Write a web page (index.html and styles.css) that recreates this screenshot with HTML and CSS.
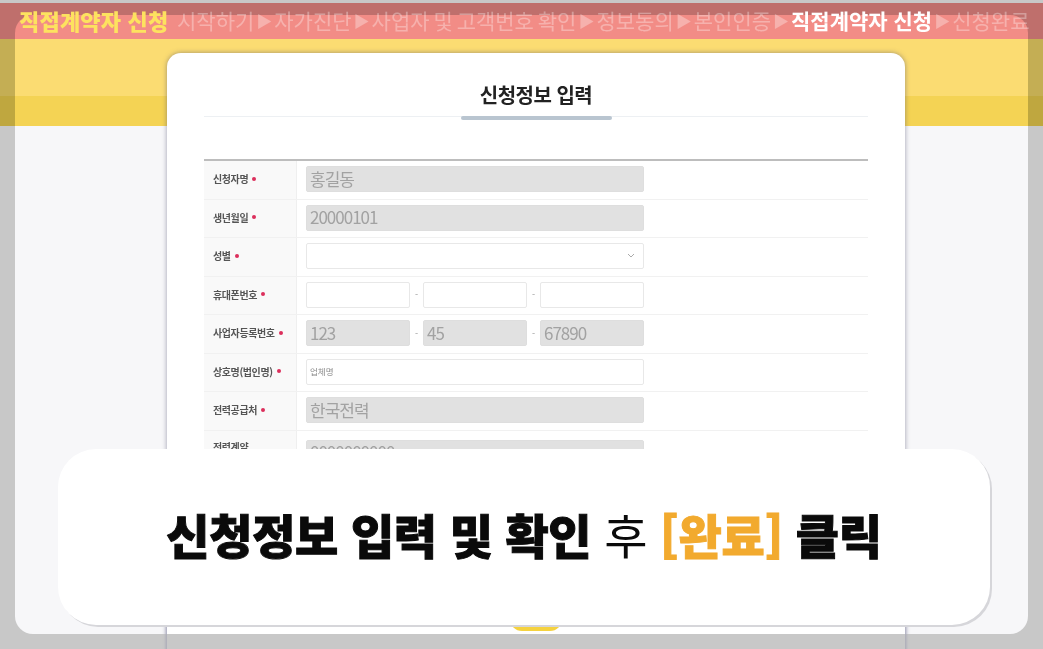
FILE: index.html
```html
<!DOCTYPE html>
<html lang="ko">
<head>
<meta charset="utf-8">
<title>직접계약자 신청</title>
<link rel="stylesheet" href="styles.css">
</head>
<body>
<div class="stage">
  <div class="card-ghost"></div>
  <main class="screen">
    <section class="card">
      <h1 class="title">신청정보 입력</h1>
      <div class="title-rule"><span class="title-mark"></span></div>
      <div class="table">
        <div class="row"><div class="label">신청자명<i class="dot"></i></div><div class="cell"><div class="field grey wide">홍길동</div></div></div>
        <div class="row"><div class="label">생년월일<i class="dot"></i></div><div class="cell"><div class="field grey wide">20000101</div></div></div>
        <div class="row"><div class="label">성별<i class="dot"></i></div><div class="cell"><div class="field wide select"><svg class="chev" width="8" height="5" viewBox="0 0 8 5"><path d="M1 1l3 3 3-3" fill="none" stroke="#aaa" stroke-width="1"/></svg></div></div></div>
        <div class="row"><div class="label">휴대폰번호<i class="dot"></i></div><div class="cell"><div class="field part"></div><span class="dash">-</span><div class="field part"></div><span class="dash">-</span><div class="field part"></div></div></div>
        <div class="row"><div class="label">사업자등록번호<i class="dot"></i></div><div class="cell"><div class="field grey part">123</div><span class="dash">-</span><div class="field grey part">45</div><span class="dash">-</span><div class="field grey part">67890</div></div></div>
        <div class="row"><div class="label">상호명(법인명)<i class="dot"></i></div><div class="cell"><div class="field wide hint">업체명</div></div></div>
        <div class="row"><div class="label">전력공급처<i class="dot"></i></div><div class="cell"><div class="field grey wide">한국전력</div></div></div>
        <div class="row row-tall"><div class="label label-top">전력계약</div><div class="cell"><div class="field grey wide">0000000000</div></div></div>
      </div>
      <div class="submit"></div>
    </section>
  </main>
  <div class="topbar">
    <span class="now">직접계약자 신청</span>
    <nav class="steps">
      <span>시작하기</span><span class="arr">▶</span>
      <span>자가진단</span><span class="arr">▶</span>
      <span>사업자 및 고객번호 확인</span><span class="arr">▶</span>
      <span>정보동의</span><span class="arr">▶</span>
      <span>본인인증</span><span class="arr">▶</span>
      <span class="cur">직접계약자 신청</span><span class="arr">▶</span>
      <span>신청완료</span>
    </nav>
  </div>
  <div class="caption"><p class="caption-text">신청정보 입력 및 확인 <span class="light">후</span> <span class="hl">[완료]</span> 클릭</p></div>
</div>
</body>
</html>
```
FILE: styles.css
```css
* { box-sizing: border-box; }
html, body { margin: 0; padding: 0; }
body { font-family: "Noto Sans CJK KR", "Noto Sans", sans-serif; background: #c8c8c8; }

.stage {
  position: relative;
  width: 1043px;
  height: 649px;
  overflow: hidden;
  padding: 15px;
  filter: blur(0.55px);
  background: linear-gradient(#c8c8c8 0 3px, #bf6f6c 3px 39px, #c4ae54 39px 96px, #bfa73f 96px 126px, #c8c8c8 126px);
}
.card-ghost {
  position: absolute;
  left: 167px;
  top: 600px;
  width: 738px;
  height: 80px;
  box-shadow: 0 0 3px 1px rgba(110, 110, 150, .4);
}
.screen {
  height: 619px;
  border-radius: 18px;
  overflow: hidden;
  padding-top: 38px;
  background: linear-gradient(#f28c86 0 24px, #fbdc72 24px 81px, #f4d354 81px 111px, #f7f7f9 111px);
}
.card {
  width: 738px;
  height: 600px;
  margin-left: 152px;
  padding: 0 37px;
  background: #fff;
  border-radius: 14px 14px 0 0;
  box-shadow: 0 0 5px rgba(70, 70, 100, .5);
}
.title {
  margin: 0;
  padding-top: 27px;
  height: 63px;
  font-size: 20px;
  line-height: 30px;
  font-weight: 700;
  letter-spacing: -.5px;
  text-align: center;
  color: #222;
}
.title-rule {
  height: 3px;
  border-top: 1px solid #edf0f3;
  display: flex;
  justify-content: center;
}
.title-mark {
  width: 151px;
  height: 4px;
  margin-top: -1px;
  border-radius: 2px;
  background: #b9c5d0;
}
.table {
  margin-top: 40px;
  border-top: 2px solid #bdbdbd;
}
.row {
  display: flex;
  height: 38.5px;
  border-bottom: 1px solid #f1f1f1;
}
.row-tall { height: 46px; }
.label {
  flex: 0 0 93px;
  display: flex;
  align-items: center;
  padding-left: 9px;
  padding-bottom: 2px;
  background: #f9f9f9;
  border-right: 1px solid #efefef;
  font-size: 10px;
  font-weight: 700;
  letter-spacing: -.4px;
  color: #555;
}
.label-top { align-items: flex-start; padding-top: 8px; }
.dot {
  width: 4px;
  height: 4px;
  margin-left: 4px;
  border-radius: 50%;
  background: #dc2f5c;
}
.cell {
  flex: 1;
  display: flex;
  align-items: center;
  padding-left: 9px;
  padding-bottom: 1px;
}
.field {
  height: 26px;
  display: flex;
  align-items: center;
  padding-left: 3px;
  padding-bottom: 2px;
  border: 1px solid #e8e8e8;
  border-radius: 2px;
  background: #fff;
  font-size: 17px;
  letter-spacing: -1px;
  color: #a2a2a2;
}
.wide { width: 338px; }
.part { width: 104px; }
.grey { background: #e1e1e1; border-color: #dedede; }
.select { justify-content: flex-end; padding-right: 8px; }
.hint { font-size: 8.5px; color: #8a8a8a; letter-spacing: 0; }
.dash {
  width: 13px;
  text-align: center;
  font-size: 9px;
  color: #999;
}
.chev { display: block; }
.submit {
  width: 52px;
  height: 40px;
  margin: 114px auto 0;
  border-radius: 0 0 12px 12px;
  background: #f5d23f;
}

.topbar {
  position: absolute;
  left: 19px;
  top: 7px;
  width: 1024px;
  display: flex;
  align-items: center;
  white-space: nowrap;
  font-size: 21px;
  line-height: 26px;
}
.now {
  flex: 0 0 158px;
  font-size: 22px;
  font-weight: 900;
  letter-spacing: .2px;
  color: #fde25f;
}
.steps {
  display: flex;
  align-items: center;
  gap: 2px;
  letter-spacing: 0;
  word-spacing: -2px;
  color: rgba(255, 255, 255, .32);
}
.arr { font-size: 16px; }
.cur { font-weight: 700; color: #fff; word-spacing: 0; }

.caption {
  position: absolute;
  left: 58px;
  top: 449px;
  width: 932px;
  height: 176px;
  display: flex;
  align-items: center;
  justify-content: center;
  border-radius: 38px;
  background: #fff;
  box-shadow: 2px 2px 0 #d6d6da;
}
.caption-text {
  margin: 0 0 6px;
  font-size: 47px;
  line-height: 60px;
  font-weight: 900;
  letter-spacing: -.3px;
  white-space: nowrap;
  color: #0a0a0a;
  -webkit-text-stroke: 1px currentColor;
}
.light { font-weight: 400; -webkit-text-stroke: 0; }
.hl { color: #f2aa2e; }
```
